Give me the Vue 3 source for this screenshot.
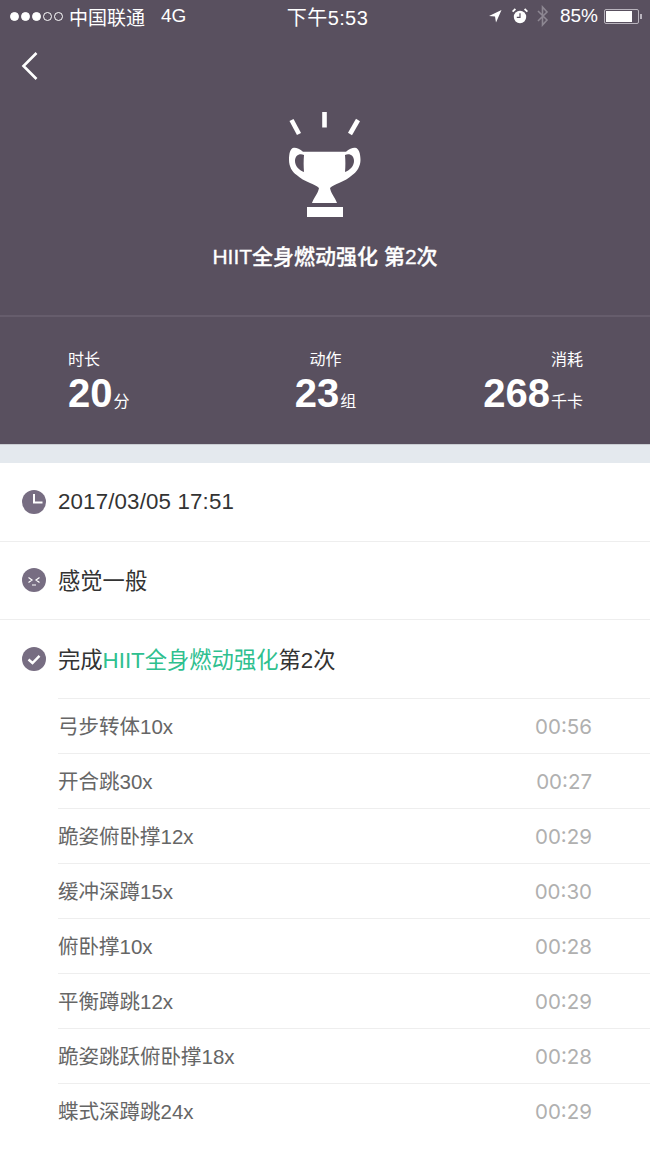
<template>
  <div class="page">
    <section class="hero">
      <div class="status-bar">
        <div class="status-left">
          <span class="dots">
            <i class="dot on"></i><i class="dot on"></i><i class="dot on"></i><i class="dot"></i><i class="dot"></i>
          </span>
          <span class="carrier">中国联通</span>
          <span class="net">4G</span>
        </div>
        <div class="status-time">下午5:53</div>
        <div class="status-right">
          <svg class="ico-loc" viewBox="0 0 14 14" width="14" height="14"><path d="M13.5 1 L1 7 L7 7.4 L8 13.5 Z" fill="#fff" /></svg>
          <svg class="ico-alarm" viewBox="0 0 16 16" width="16" height="16">
            <circle cx="8" cy="9" r="6.2" fill="#fff" />
            <path d="M8 5.2 V9.3 H4.8" fill="none" stroke="#59505f" stroke-width="1.2" />
            <path d="M0.6 3.6 L3.4 1 M15.4 3.6 L12.6 1" stroke="#fff" stroke-width="1.8" />
          </svg>
          <svg class="ico-bt" viewBox="0 0 14 22" width="14" height="22"><path d="M2 6 L11 15 L6.5 20 V2 L11 7 L2 16" fill="none" stroke="#8d8792" stroke-width="1.6" /></svg>
          <span class="pct">85%</span>
          <span class="battery"><span class="battery-fill"></span></span>
          <span class="battery-tip"></span>
        </div>
      </div>

      <div class="nav">
        <svg viewBox="0 0 20 30" width="20" height="30"><path d="M16.5 2 L3.5 15 L16.5 28" fill="none" stroke="#fff" stroke-width="2.6" /></svg>
      </div>

      <div class="trophy-wrap">
        <svg class="trophy" viewBox="0 0 72 106" width="72" height="106">
          <g stroke="#fff" stroke-width="4.6" fill="none">
            <path d="M35.5 0 V15.5" />
            <path d="M2.5 8 L10 22" />
            <path d="M69 8 L61 22" />
          </g>
          <path fill="#fff" fill-rule="evenodd" d="M14 39.7 H57 C60 36.5 64 35.5 66 35.7 C70 36 71.5 42 71.5 48 C71.5 54 68 60 63.3 63 C60 66 55 69 50 71 C47 72 43 74 41 76 C42 82 46 85 48 91 H23 C25 85 29 82 30 76 C28 74 24 72 21 71 C16 69 11 66 7.7 63 C3 60 0 54 0 48 C0 42 1 36 5 35.7 C7 35.5 11 36.5 14 39.7 Z M15 43 C10 41 6 44 6 49 C6 54 10 58 15 60 C14.5 54 14.5 49 15 43 Z M56 43 C61 41 65 44 65 49 C65 54 61 58 56 60 C56.5 54 56.5 49 56 43 Z" />
          <rect x="18" y="95" width="36" height="10" fill="#fff" />
        </svg>
      </div>

      <h1 class="title">HIIT全身燃动强化 第2次</h1>

      <div class="stats">
        <div v-for="s in stats" :key="s.label" class="stat" :class="s.align">
          <div class="stat-label">{{ s.label }}</div>
          <div class="stat-value">{{ s.value }}<span class="stat-unit">{{ s.unit }}</span></div>
        </div>
      </div>
    </section>

    <div class="gap"></div>

    <section class="info">
      <div class="info-row">
        <svg class="badge" viewBox="0 0 24 24" width="24" height="24">
          <circle cx="12" cy="12" r="12" fill="#776d82" />
          <path d="M12 4 V12.5 H20.5" fill="none" stroke="#fff" stroke-width="2" />
        </svg>
        <span class="date">2017/03/05 17:51</span>
      </div>
      <div class="info-row">
        <svg class="badge" viewBox="0 0 24 24" width="24" height="24">
          <circle cx="12" cy="12" r="12" fill="#776d82" />
          <path d="M6.5 9.5 L10 12 L6.5 14.5 M17.5 9.5 L14 12 L17.5 14.5 M10 17 H14" fill="none" stroke="#fff" stroke-width="1.2" />
        </svg>
        <span class="cjk-line">感觉一般</span>
      </div>
      <div class="info-row last">
        <svg class="badge" viewBox="0 0 24 24" width="24" height="24">
          <circle cx="12" cy="12" r="12" fill="#776d82" />
          <path d="M6.5 12.5 L10.5 16 L17.5 8.8" fill="none" stroke="#fff" stroke-width="2.4" />
        </svg>
        <span class="cjk-line">完成<em class="accent">HIIT全身燃动强化</em>第2次</span>
      </div>
    </section>

    <ul class="moves">
      <li v-for="m in moves" :key="m.name" class="move">
        <span class="move-name">{{ m.name }}</span>
        <span class="move-time">{{ m.time }}</span>
      </li>
    </ul>
  </div>
</template>

<script setup>
const stats = [
  { label: '时长', value: '20', unit: '分', align: 'left' },
  { label: '动作', value: '23', unit: '组', align: 'center' },
  { label: '消耗', value: '268', unit: '千卡', align: 'right' },
]

const moves = [
  { name: '弓步转体10x', time: '00:56' },
  { name: '开合跳30x', time: '00:27' },
  { name: '跪姿俯卧撑12x', time: '00:29' },
  { name: '缓冲深蹲15x', time: '00:30' },
  { name: '俯卧撑10x', time: '00:28' },
  { name: '平衡蹲跳12x', time: '00:29' },
  { name: '跪姿跳跃俯卧撑18x', time: '00:28' },
  { name: '蝶式深蹲跳24x', time: '00:29' },
]
</script>

<style>
html,
body {
  margin: 0;
  background: #fff;
}
</style>

<style scoped>
.page {
  width: 650px;
  height: 1156px;
  overflow: hidden;
  background: #fff;
  font-family: "Liberation Sans", "Noto Sans CJK SC", sans-serif;
}

.hero {
  height: 444px;
  background: #59505f;
  color: #fff;
  display: flex;
  flex-direction: column;
}

.status-bar {
  height: 32px;
  display: grid;
  grid-template-columns: 1fr auto 1fr;
  align-items: center;
  font-size: 19px;
  padding: 0 8px 0 10px;
}

.status-left {
  display: flex;
  align-items: center;
}

.dots {
  display: flex;
  gap: 2px;
  margin-right: 6px;
}

.dot {
  width: 9px;
  height: 9px;
  border: 1px solid #fff;
  border-radius: 50%;
  box-sizing: border-box;
}

.dot.on {
  background: #fff;
}

.net {
  margin-left: 16px;
}

.status-time {
  font-size: 20px;
  letter-spacing: 0.4px;
  padding-left: 3px;
}

.status-right {
  display: flex;
  align-items: center;
  justify-content: flex-end;
}

.ico-loc {
  margin-right: 10px;
}

.ico-alarm {
  margin-right: 8px;
}

.ico-bt {
  margin-right: 10px;
}

.pct {
  margin-right: 6px;
}

.battery {
  width: 35px;
  height: 15px;
  border: 1px solid #b9b4bd;
  border-radius: 2px;
  box-sizing: border-box;
  padding: 1px;
  display: flex;
}

.battery-fill {
  width: 85%;
  background: #fff;
}

.battery-tip {
  width: 2px;
  height: 5px;
  background: #b9b4bd;
  margin-left: 1px;
}

.nav {
  height: 42px;
  padding: 0 0 0 20px;
  display: flex;
  align-items: center;
  margin-top: 13px;
}

.trophy-wrap {
  display: flex;
  justify-content: center;
  margin-top: 25px;
}

.trophy {
  display: block;
}

.title {
  margin: 25px 0 0;
  text-align: center;
  font-size: 21px;
  line-height: 28px;
  font-weight: 500;
  color: #fff;
  -webkit-text-stroke: 0.3px #fff;
}

.stats {
  margin-top: 44px;
  border-top: 2px solid #665d6c;
  flex: 1;
  display: grid;
  grid-template-columns: 1fr 1fr 1fr;
  padding: 33px 67px 0 68px;
}

.stat {
  display: flex;
  flex-direction: column;
}

.stat.left {
  align-items: flex-start;
}

.stat.center {
  align-items: center;
}

.stat.right {
  align-items: flex-end;
}

.stat-label {
  font-size: 16px;
  line-height: 20px;
}

.stat-value {
  font-size: 40px;
  line-height: 46px;
  font-weight: 700;
}

.stat-unit {
  font-size: 16px;
  font-weight: 400;
  margin-left: 1px;
}

.gap {
  height: 19px;
  background: #e4e9ee;
  border-top: 1px solid #c9cdd2;
  box-sizing: border-box;
}

.info-row {
  height: 78.5px;
  display: flex;
  align-items: center;
  gap: 12px;
  padding-left: 22px;
  font-size: 22.3px;
  color: #333;
  border-bottom: 1px solid #eeeeee;
  box-sizing: border-box;
}

.info-row.last {
  height: 78px;
  border-bottom: 0;
}

.date {
  letter-spacing: 0.15px;
}

.cjk-line {
  padding-bottom: 3px;
}

.badge {
  flex: none;
}

.accent {
  font-style: normal;
  color: #2fc08f;
}

.moves {
  list-style: none;
  margin: 0;
  padding: 0 0 0 58px;
}

.move {
  height: 55px;
  display: flex;
  align-items: center;
  justify-content: space-between;
  padding-right: 58px;
  border-top: 1px solid #eeeeee;
  box-sizing: border-box;
  font-size: 20.5px;
}

.move-name {
  color: #666;
  padding-bottom: 2px;
}

.move-time {
  font-family: Inter, "Liberation Sans", sans-serif;
  font-size: 20.5px;
  color: #b0b0b0;
}
</style>
